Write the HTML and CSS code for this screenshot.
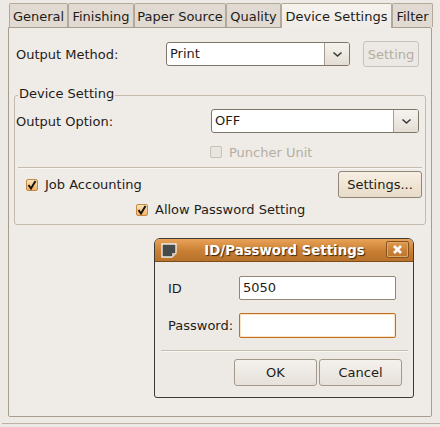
FILE: index.html
```html
<!DOCTYPE html>
<html lang="en">
<head>
    <meta charset="UTF-8">
    <meta name="viewport" content="width=device-width, initial-scale=1.0">
    <title>Device Settings</title>
    <link rel="stylesheet" href="styles.css">
</head>
<body>
    <div class="tabs">
        <div class="tab tab-general">General</div>
        <div class="tab tab-finishing">Finishing</div>
        <div class="tab tab-paper">Paper Source</div>
        <div class="tab tab-quality">Quality</div>
        <div class="tab tab-active">Device Settings</div>
        <div class="tab tab-filter">Filter</div>
    </div>

    <div class="panel">
        <div class="method-row">
            <span class="method-label">Output Method:</span>
            <div class="combo method-combo">
                <span class="combo-value">Print</span>
                <span class="combo-arrow"><svg width="11" height="7" viewBox="0 0 11 7"><path d="M1.5 1.5 L5.5 5 L9.5 1.5" fill="none" stroke="#3c3a36" stroke-width="1.6"/></svg></span>
            </div>
            <div class="btn btn-disabled">Setting</div>
        </div>

        <div class="group">
            <div class="group-title">Device Setting</div>
            <div class="option-row">
                <span class="option-label">Output Option:</span>
                <div class="combo option-combo">
                    <span class="combo-value">OFF</span>
                    <span class="combo-arrow"><svg width="11" height="7" viewBox="0 0 11 7"><path d="M1.5 1.5 L5.5 5 L9.5 1.5" fill="none" stroke="#3c3a36" stroke-width="1.6"/></svg></span>
                </div>
            </div>
            <div class="puncher-row">
                <span class="check check-off"></span>
                <span class="puncher-label">Puncher Unit</span>
            </div>
            <div class="separator"></div>
            <div class="job-row">
                <span class="check"><svg width="12" height="12" viewBox="0 0 12 12"><path d="M2.5 6 L5 9.5 L9.5 2" fill="none" stroke="#1c1408" stroke-width="2"/></svg></span>
                <span class="job-label">Job Accounting</span>
                <div class="btn btn-settings">Settings...</div>
            </div>
            <div class="allow-row">
                <span class="check"><svg width="12" height="12" viewBox="0 0 12 12"><path d="M2.5 6 L5 9.5 L9.5 2" fill="none" stroke="#1c1408" stroke-width="2"/></svg></span>
                <span class="job-label">Allow Password Setting</span>
            </div>
        </div>
    </div>
    <div class="bottom-line"></div>

    <div class="dialog">
        <div class="titlebar">
            <svg class="title-icon" width="16" height="15" viewBox="0 0 16 15">
                <path d="M1 1 H15 V10 L11 14 H1 Z" fill="#464a49" stroke="#eeebe6" stroke-width="1.4"/>
                <path d="M15 10 L11 14 V10 Z" fill="#c4c1bb"/>
            </svg>
            <span class="title-text">ID/Password Settings</span>
            <div class="title-close"><svg width="11" height="11" viewBox="0 0 11 11"><path d="M2 2 L9 9 M9 2 L2 9" stroke="#fff" stroke-width="2.6"/></svg></div>
        </div>
        <div class="dialog-body">
            <div class="field-row field-id">
                <label class="field-label">ID</label>
                <div class="entry">5050</div>
            </div>
            <div class="field-row field-password">
                <label class="field-label">Password:</label>
                <div class="entry entry-focus"></div>
            </div>
            <div class="separator dialog-separator"></div>
            <div class="dialog-buttons">
                <div class="btn btn-dialog">OK</div>
                <div class="btn btn-dialog">Cancel</div>
            </div>
        </div>
    </div>
</body>
</html>
```

FILE: styles.css
```css
html, body {
    margin: 0;
    padding: 0;
}

body {
    width: 440px;
    height: 427px;
    overflow: hidden;
    position: relative;
    background-color: #edeae5;
    font-family: "DejaVu Sans", sans-serif;
    font-size: 13px;
    color: #1f1c18;
}

.tabs {
    display: flex;
    align-items: flex-end;
    height: 27px;
    padding: 3px 0 0 9px;
    box-sizing: border-box;
}

.tab {
    height: 24px;
    box-sizing: border-box;
    background: #e0dad3;
    border: 1px solid #b3a99b;
    border-bottom: none;
    border-radius: 2px 2px 0 0;
    display: flex;
    align-items: center;
    justify-content: center;
    padding-top: 1px;
}

.tab-general { width: 59px; }
.tab-finishing { width: 66px; }
.tab-paper { width: 92px; }
.tab-quality { width: 55px; }
.tab-filter { width: 41px; }

.tab-active {
    width: 111px;
    height: 25px;
    background: linear-gradient(#f6f3ef, #efebe7);
    padding-top: 0;
    margin-bottom: -1px;
    position: relative;
    z-index: 1;
}

.panel {
    margin: 0 8px 0 8px;
    height: 390px;
    box-sizing: border-box;
    background: #efebe6;
    border: 1px solid #a89e90;
    border-radius: 0 2px 2px 2px;
    padding: 12px 5px 0 5px;
}

.method-row {
    display: flex;
    align-items: center;
    height: 28px;
}

.method-label {
    margin-left: 2px;
    width: 150px;
}

.combo {
    display: flex;
    height: 24px;
    box-sizing: border-box;
    background: #fff;
    border: 1px solid #7f766a;
    border-radius: 3px;
}

.method-combo { width: 184px; }
.option-combo { width: 208px; }

.combo-value {
    flex: 1;
    padding-left: 3px;
    line-height: 22px;
}

.combo-arrow {
    width: 24px;
    display: flex;
    align-items: center;
    justify-content: center;
    border-left: 1px solid #a89e90;
    border-radius: 0 2px 2px 0;
    background: linear-gradient(#f6f3ef, #e3ddd4);
}

.btn {
    display: flex;
    align-items: center;
    justify-content: center;
    box-sizing: border-box;
    height: 27px;
    border: 1px solid #a3998b;
    border-radius: 3px;
    background: linear-gradient(#f4f1ed, #e6e1da);
}

.btn-disabled {
    width: 56px;
    height: 26px;
    margin-left: 13px;
    color: #b5aea4;
    background: #ece8e3;
    border-color: #c9c2b8;
}

.group {
    position: relative;
    margin: 27px 0 0 0;
    height: 130px;
    box-sizing: border-box;
    border: 1px solid #c4bbae;
    border-radius: 3px;
    padding-top: 13px;
}

.group-title {
    position: absolute;
    top: -10px;
    left: 3px;
    padding: 0 1px;
    background: #efebe6;
}

.option-row {
    display: flex;
    align-items: center;
    height: 24px;
}

.option-label {
    margin-left: 1px;
    width: 195px;
}

.puncher-row {
    display: flex;
    align-items: center;
    height: 18px;
    margin-top: 10px;
    padding-left: 195px;
    color: #b5aea4;
}

.puncher-label {
    margin-left: 7px;
}

.check {
    width: 12px;
    height: 12px;
    box-sizing: border-box;
    border: 1px solid #c58a41;
    border-radius: 2px;
    background: linear-gradient(#fbe3bb, #f0b36a);
    display: flex;
    flex-shrink: 0;
}

.check svg {
    margin: -1px;
}

.check-off {
    background: #e8e4de;
    border-color: #c9c2b8;
}

.separator {
    height: 1px;
    background: #c4bbae;
    border-bottom: 1px solid #f8f6f3;
}

.group > .separator {
    margin: 6px 3px 0 3px;
}

.job-row {
    display: flex;
    align-items: center;
    height: 27px;
    margin-top: 2px;
    padding-left: 11px;
}

.job-label {
    margin-left: 7px;
    padding-bottom: 1px;
}

.btn-settings {
    width: 84px;
    margin-left: auto;
    margin-right: 3px;
    border-color: #8f8677;
    background: linear-gradient(#f7efe3, #e8dcc9);
}

.allow-row {
    display: flex;
    align-items: center;
    height: 18px;
    margin-top: 3px;
    padding-left: 121px;
}

.bottom-line {
    margin: 6px 0 0 2px;
    height: 1px;
    background: #bdb3a5;
}

/* dialog floats over the panel */
.dialog {
    position: absolute;
    left: 154px;
    top: 238px;
    width: 260px;
    height: 160px;
    box-sizing: border-box;
    background: #edeae5;
    border: 1px solid #3d3a35;
    border-radius: 6px 6px 3px 3px;
    overflow: hidden;
}

.titlebar {
    position: relative;
    height: 23px;
    display: flex;
    align-items: center;
    justify-content: center;
    background: linear-gradient(#e9a257, #c87f34 55%, #b9722a);
    border-bottom: 1px solid #7d4d1c;
    box-sizing: border-box;
}

.title-icon {
    position: absolute;
    left: 6px;
    top: 4px;
}

.title-text {
    font-size: 13.33px;
    font-weight: bold;
    color: #fff;
    text-shadow: 1px 1px 1px #3c2408;
    margin-left: 1px;
}

.title-close {
    position: absolute;
    right: 4px;
    top: 2px;
    width: 23px;
    height: 17px;
    box-sizing: border-box;
    border: 1px solid #84531f;
    border-radius: 2px;
    box-shadow: inset 0 0 0 1px #e0a868;
    display: flex;
    align-items: center;
    justify-content: center;
}

.dialog-body {
    padding: 14px 5px 0 6px;
}

.field-row {
    display: flex;
    align-items: center;
}

.field-label {
    width: 71px;
    margin-left: 7px;
}

.entry {
    width: 157px;
    height: 24px;
    box-sizing: border-box;
    background: #fff;
    border: 1px solid #8f8677;
    border-radius: 2px;
    padding-left: 3px;
    line-height: 22px;
}

.entry-focus {
    height: 25px;
    border-color: #c2701f;
    box-shadow: inset 0 0 0 1px #fbe3c4;
}

.field-password {
    margin-top: 13px;
}

.dialog-separator {
    margin-top: 12px;
}

.dialog-buttons {
    display: flex;
    justify-content: flex-end;
    gap: 2px;
    margin: 7px 6px 0 0;
}

.btn-dialog {
    width: 83px;
}
```
